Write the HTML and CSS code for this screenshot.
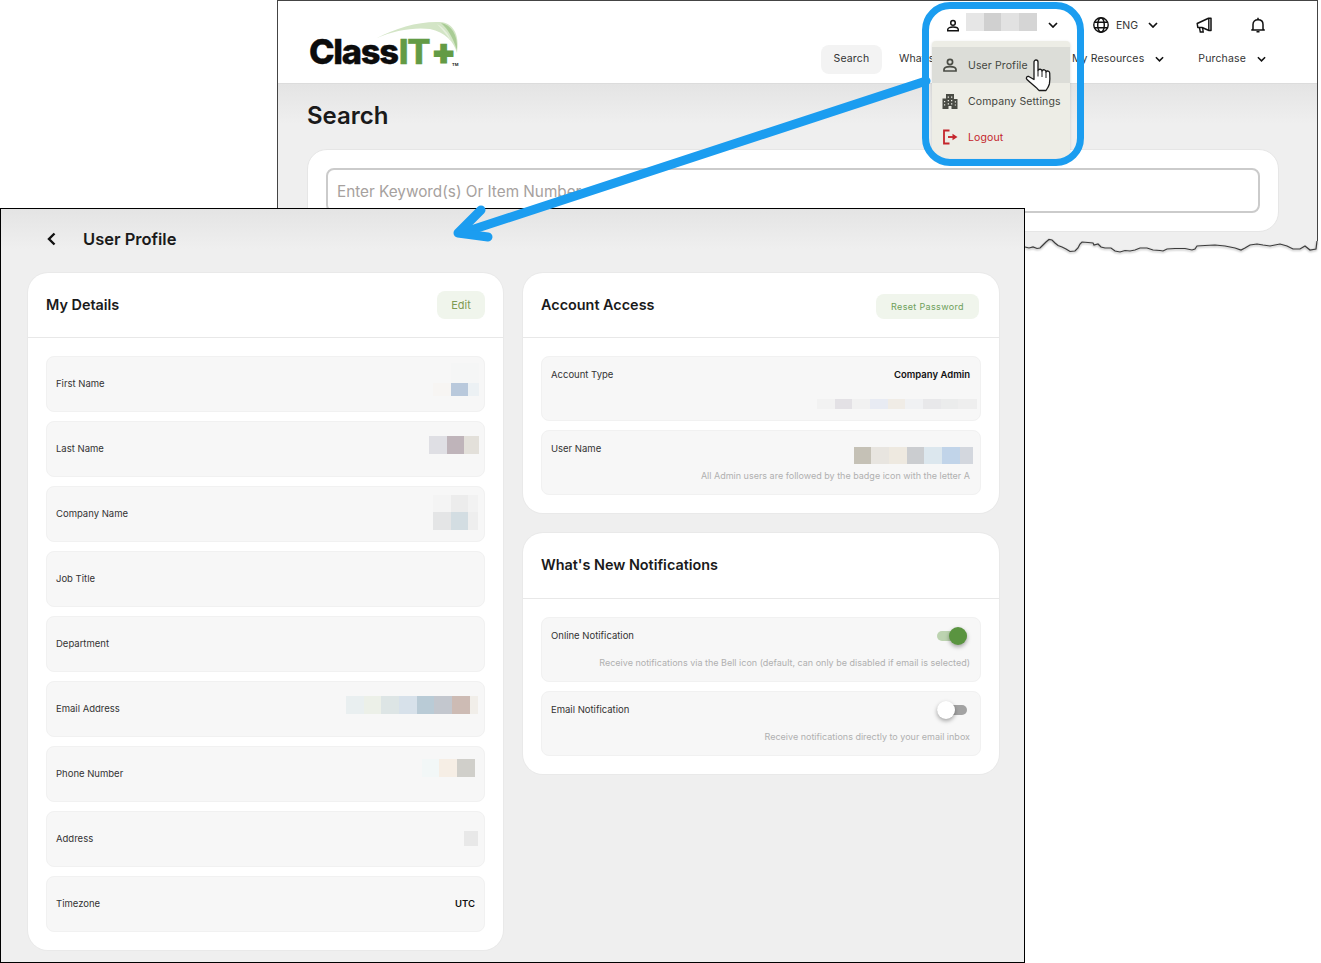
FILE: index.html
```html
<!DOCTYPE html>
<html lang="en">
<head>
<meta charset="utf-8">
<title>User Profile</title>
<link rel="stylesheet" href="styles.css">
</head>
<body>
<div class="canvas">

  <section class="win-back">
    <header class="top">
      <div class="logo">
        <svg class="swoosh" width="90" height="40" viewBox="0 0 90 40">
          <path fill="#d3e5c6" d="M2 18C20 8 45 1 65 2 78 3 85 14 82 33 79 22 70 12 55 9 38 7 18 11 2 18Z"/>
          <path fill="#a9cc95" d="M66 3C76 5 83 14 82 30 78 18 73 9 66 3Z"/>
          <path fill="#e6f0dd" d="M62 4C69 8 74 14 76 21 72 15 67 9 62 4Z"/>
        </svg>
        <span class="logo-text">Class<span class="logo-green">IT</span><span class="logo-plus">+</span></span>
        <span class="logo-tm">TM</span>
      </div>
      <div class="top-right">
        <div class="util-row">
          <svg class="i-user" viewBox="0 0 16 14"><circle cx="8" cy="4" r="2.6" fill="none" stroke="#111" stroke-width="1.7"/><path d="M2 13v-1.400C2 9.700 5 8.600 8 8.600s6 1.100 6 3V13Z" fill="none" stroke="#111" stroke-width="1.700"/></svg>
          <span class="blur-name"></span>
          <svg class="chev" viewBox="0 0 10 6"><path d="M1 1l4 4 4-4" fill="none" stroke="#111" stroke-width="1.700"/></svg>
          <svg class="i-globe" viewBox="0 0 16 16"><g fill="none" stroke="#111" stroke-width="1.400"><circle cx="8" cy="8" r="7.200"/><ellipse cx="8" cy="8" rx="3.300" ry="7.200"/><path d="M1.500 5.300h13M1.500 10.700h13"/></g></svg>
          <span class="eng">ENG</span>
          <svg class="chev chev-eng" viewBox="0 0 10 6"><path d="M1 1l4 4 4-4" fill="none" stroke="#111" stroke-width="1.700"/></svg>
          <svg class="i-mega" viewBox="0 0 16 16"><path d="M1.200 6.500L12.500 1.200H15V13.500H13L6 10.500H1.800Z" fill="none" stroke="#111" stroke-width="1.500" stroke-linejoin="round"/><path d="M3.500 10.800l.8 4.200h2.900l-.6-4.300M12.800 1.500v11.800" fill="none" stroke="#111" stroke-width="1.400"/></svg>
          <svg class="i-bell" viewBox="0 0 14 16"><path d="M2 12V7.500C2 4.500 4 2.800 7 2.800s5 1.700 5 4.700V12l1.200 1H.8Z" fill="none" stroke="#111" stroke-width="1.500" stroke-linejoin="round"/><path d="M7 .8v2M5.500 14.700h3" stroke="#111" stroke-width="1.500"/></svg>
        </div>
        <nav class="nav-row">
          <span class="nav-pill">Search</span>
          <span class="nav-item nav-whats">What's New</span>
          <span class="nav-item">My Resources</span>
          <svg class="chev chev-nav" viewBox="0 0 10 6"><path d="M1 1l4 4 4-4" fill="none" stroke="#111" stroke-width="1.700"/></svg>
          <span class="nav-item nav-purchase">Purchase</span>
          <svg class="chev chev-nav" viewBox="0 0 10 6"><path d="M1 1l4 4 4-4" fill="none" stroke="#111" stroke-width="1.700"/></svg>
        </nav>
      </div>
    </header>
    <div class="search-body">
      <h1 class="search-title">Search</h1>
      <div class="search-card">
        <div class="search-input">Enter Keyword(s) Or Item Number</div>
      </div>
    </div>

    <div class="menu">
      <div class="menu-row is-hover">
        <svg class="menu-icon" viewBox="0 0 16 16"><circle cx="8" cy="5" r="2.600" fill="none" stroke="#4a4c45" stroke-width="1.700"/><path d="M2 14v-1.400C2 10.700 5 9.600 8 9.600s6 1.100 6 3V14Z" fill="none" stroke="#4a4c45" stroke-width="1.700"/></svg>
        <span>User Profile</span>
      </div>
      <div class="menu-row">
        <svg class="menu-icon" viewBox="0 0 16 16"><path fill="#4a4c45" fill-rule="evenodd" d="M.5 16V5.500h3.500V1h8v5h3.500v10H9.500v-3h-3v3ZM2 8v1.200h1.200V8Zm0 3.200v1.200h1.200v-1.200ZM5.700 3.500v1.200H7V3.500Zm3.300 0v1.200h1.300V3.500ZM5.700 7v1.200H7V7ZM9 7v1.200h1.300V7ZM5.700 10.300v1.200H7v-1.200Zm3.300 0v1.200h1.300v-1.200Zm3.800-2.100v1.200H14V8.200Zm0 3.200v1.200H14v-1.200Z"/></svg>
        <span>Company Settings</span>
      </div>
      <div class="menu-row menu-logout">
        <svg class="menu-icon" viewBox="0 0 16 16"><path d="M7.500 1.500H2v13h5.500" fill="none" stroke="#c4242b" stroke-width="1.800"/><path d="M6 8h6" stroke="#c4242b" stroke-width="1.800"/><path d="M10.500 4.800l5 3.200-5 3.200Z" fill="#c4242b"/></svg>
        <span>Logout</span>
      </div>
    </div>

    <svg class="torn" width="296" height="30" viewBox="0 0 296 30">
      <path class="torn-fill" d="M0 12L4 13 8 12 12 13.500 15 13 18 10 21 7 24 4.500 27 5 30 8 33 10.500 37 12 41 14 45 16.500 50 16 53 13 55 9 57 7 63 7.500 68 8 69 10 73 9 76 12 80 13 86 13 90 16 95 17 100 15.500 105 16 110 15 115 13 122 13 128 15 135 15.500 138 16 142 14 150 13.500 160 13.500 167 15 170 14 172 11 180 10.500 190 10 200 11 210 13 216 15 220 13 225 10 232 9 238 10 245 11 255 9 262 11 268 14 275 14 280 11 285 15 291 14 292 6 296 6V30H0Z"/>
      <path class="torn-line" d="M0 12L4 13 8 12 12 13.500 15 13 18 10 21 7 24 4.500 27 5 30 8 33 10.500 37 12 41 14 45 16.500 50 16 53 13 55 9 57 7 63 7.500 68 8 69 10 73 9 76 12 80 13 86 13 90 16 95 17 100 15.500 105 16 110 15 115 13 122 13 128 15 135 15.500 138 16 142 14 150 13.500 160 13.500 167 15 170 14 172 11 180 10.500 190 10 200 11 210 13 216 15 220 13 225 10 232 9 238 10 245 11 255 9 262 11 268 14 275 14 280 11 285 15 291 14 292 6"/>
    </svg>
  </section>

  <section class="win-front">
    <div class="page-head">
      <svg class="back-chev" viewBox="0 0 9 14"><path d="M7.500 1.500L2 7l5.500 5.500" fill="none" stroke="#111" stroke-width="2.400"/></svg>
      <h2 class="page-title">User Profile</h2>
    </div>
    <div class="columns">
      <div class="col col-left">
        <article class="card">
          <div class="card-head">
            <h3 class="card-title">My Details</h3>
            <span class="btn btn-edit">Edit</span>
          </div>
          <div class="card-body">
            <div class="field"><span>First Name</span><i class="blur blur-first-a"></i><i class="blur blur-first"></i></div>
            <div class="field"><span>Last Name</span><i class="blur blur-last"></i></div>
            <div class="field"><span>Company Name</span><i class="blur blur-co-a"></i><i class="blur blur-co"></i></div>
            <div class="field"><span>Job Title</span></div>
            <div class="field"><span>Department</span></div>
            <div class="field"><span>Email Address</span><i class="blur blur-email"></i></div>
            <div class="field"><span>Phone Number</span><i class="blur blur-phone"></i></div>
            <div class="field"><span>Address</span><i class="blur blur-address"></i></div>
            <div class="field"><span>Timezone</span><b class="value">UTC</b></div>
          </div>
        </article>
      </div>
      <div class="col col-right">
        <article class="card">
          <div class="card-head">
            <h3 class="card-title">Account Access</h3>
            <span class="btn btn-reset">Reset Password</span>
          </div>
          <div class="card-body">
            <div class="info">
              <div class="info-top"><span>Account Type</span><b class="value">Company Admin</b></div>
              <i class="blur blur-type"></i>
            </div>
            <div class="info">
              <div class="info-top"><span>User Name</span></div>
              <i class="blur blur-user"></i>
              <p class="note">All Admin users are followed by the badge icon with the letter A</p>
            </div>
          </div>
        </article>
        <article class="card">
          <div class="card-head card-head-tall">
            <h3 class="card-title">What's New Notifications</h3>
          </div>
          <div class="card-body">
            <div class="info">
              <div class="info-top"><span>Online Notification</span><span class="toggle toggle-on"></span></div>
              <p class="note">Receive notifications via the Bell icon (default, can only be disabled if email is selected)</p>
            </div>
            <div class="info">
              <div class="info-top"><span>Email Notification</span><span class="toggle toggle-off"></span></div>
              <p class="note">Receive notifications directly to your email inbox</p>
            </div>
          </div>
        </article>
      </div>
    </div>
  </section>

  <svg class="arrow" width="1321" height="963" viewBox="0 0 1321 963">
    <g fill="none" stroke="#1b9df0" stroke-width="9" stroke-linecap="round" stroke-linejoin="round">
      <path d="M926 81L462 233"/>
      <path d="M481 210L458 233 488 237"/>
    </g>
  </svg>
  <div class="ring"></div>
  <svg class="hand" width="30" height="36" viewBox="0 0 30 36">
    <path d="M10 4a2 2 0 0 1 4 0v8.500a2.100 2.100 0 0 1 4 .5 2.100 2.100 0 0 1 4 1 2 2 0 0 1 3.700 1c.3 4 .3 8-.3 11-.6 2.500-2 4.500-3.400 6.500H15c-2-3-8-7-12-11-1.500-1.500-.2-3.500 1.800-3l5.200 3Z" fill="#fff" stroke="#1a1a1a" stroke-width="1.300" stroke-linejoin="round"/>
    <path d="M14 12.500v6M18 13v6M22 14v6" stroke="#1a1a1a" stroke-width="1" fill="none"/>
  </svg>
</div>
</body>
</html>
```

FILE: styles.css
```css
* { box-sizing: border-box; }
html, body { margin: 0; padding: 0; background: #fff; }
body { font-family: Inter, "Liberation Sans", sans-serif; color: #222; }
h1, h2, h3, p { margin: 0; }
i, b { font-style: normal; }

.canvas { position: relative; width: 1321px; height: 963px; overflow: hidden; background: #fff; }

/* Back window (free canvas) */
.win-back {
  position: absolute; left: 277px; top: 0; width: 1041px; height: 262px;
  border: 1px solid #444; border-bottom: 0; background: #efefef;
}
.top {
  display: flex; justify-content: space-between; height: 83px;
  background: #fff; border-bottom: 1px solid #dcdcdc;
}
.logo { position: relative; margin: 31px 0 0 31px; width: 160px; height: 42px; }
.logo-text {
  display: block; font-family: Inter, sans-serif; font-weight: 800; font-size: 34.500px;
  line-height: 38px; letter-spacing: -1.300px; color: #0c0c0c; position: relative;
  -webkit-text-stroke: .4px currentColor;
}
.logo-green { color: #639b45; margin-left: 1px; }
.logo-plus {
  color: #639b45; font-weight: 900; font-size: 35px; margin-left: 2px;
  letter-spacing: -4px; -webkit-text-stroke: 1.200px currentColor;
}
.swoosh { position: absolute; left: 66px; top: -12px; }
.logo-tm { position: absolute; left: 143px; top: 30px; font-size: 4px; font-weight: 700; color: #222; }

.top-right { display: flex; flex-direction: column; align-items: flex-end; padding: 14px 51px 0 0; }
.util-row { display: flex; align-items: center; height: 20px; margin-right: 1px; }
.nav-row { display: flex; align-items: center; margin-top: 10px; height: 29px; font-size: 10.500px; letter-spacing: .15px; color: #333; }
.i-user { width: 14px; height: 13px; margin-right: 6px; }
.blur-name {
  width: 71px; height: 18px; margin: -6px 11px 0 0;
  background: linear-gradient(90deg, #e6e6e6 18px, #d0d0d0 18px 35px, #e2e2e2 35px 53px, #d5d5d5 53px);
}
.chev { width: 10px; height: 6px; }
.i-globe { width: 16px; height: 16px; margin-left: 35px; }
.eng { font-size: 10.500px; color: #333; margin-left: 7px; width: 22px; }
.chev-eng { margin-left: 10px; }
.i-mega { width: 16px; height: 16px; margin-left: 38px; }
.i-bell { width: 14px; height: 16px; margin-left: 39px; }
.nav-pill {
  display: flex; align-items: center; justify-content: center; width: 61px; height: 29px;
  padding-bottom: 2px; background: #f3f3f3; border-radius: 8px;
}
.nav-item { padding-bottom: 2px; }
.nav-whats { margin-left: 17px; width: 173px; }
.chev-nav { width: 9px; margin-left: 11px; margin-bottom: 2px; }
.nav-purchase { margin-left: 34px; }

.search-body {
  padding: 18px 38px 0 29px; height: 178px;
  background: linear-gradient(#e4e4e4, #efefef 40px);
}
.search-title { font-size: 24px; font-weight: 600; line-height: 28px; color: #1a1a1a; }
.search-card {
  margin-top: 19px; height: 83px; padding: 18px; background: #fff;
  border: 1px solid #e6e6e6; border-radius: 20px;
}
.search-input {
  height: 45px; padding: 0 9px; line-height: 43px; font-size: 15.300px; color: #a6a19e;
  border: 2px solid #cbcbcb; border-radius: 8px;
}

.menu {
  position: absolute; left: 654px; top: 40px; width: 138px; height: 117px; padding-top: 6px;
  background: #edede6; border-radius: 4px; box-shadow: 0 1px 3px rgba(0,0,0,.15);
}
.menu-row { display: flex; align-items: center; gap: 10px; height: 36px; padding-left: 10px; font-size: 10.500px; letter-spacing: .12px; color: #44463f; }
.menu-row.is-hover { background: #dcddd8; }
.menu-logout { color: #c4242b; }
.menu-icon { width: 16px; height: 16px; }

.torn { position: absolute; left: 747px; top: 234px; }
.torn-fill { fill: #fff; }
.torn-line { fill: none; stroke: #3c3c3c; stroke-width: 1.200; filter: drop-shadow(0 1px 1px rgba(0,0,0,.4)); }

/* Front window */
.win-front {
  position: absolute; left: 0; top: 208px; width: 1025px; height: 755px;
  border: 1px solid #000; padding: 0 25px 0 27px;
  background: linear-gradient(#e4e4e4, #efefef 40px);
}
.page-head { display: flex; align-items: center; height: 64px; padding: 0 0 4px 19px; }
.back-chev { width: 9px; height: 14px; }
.page-title { margin-left: 27px; font-size: 16.500px; font-weight: 600; color: #1a1a1a; }
.columns { display: flex; gap: 20px; align-items: flex-start; }
.col-left { width: 475px; }
.col-right { flex: 1; display: flex; flex-direction: column; gap: 20px; }
.card { background: #fff; border-radius: 20px; box-shadow: 0 0 0 1px #e9e9e9; }
.card-head {
  display: flex; align-items: center; justify-content: space-between; height: 65px;
  padding: 0 18px; border-bottom: 1px solid #e8e8e8;
}
.card-head-tall { height: 66px; padding-bottom: 1px; }
.card-title { margin-top: -1px; font-size: 14.400px; font-weight: 600; color: #1a1a1a; }
.card-body { display: flex; flex-direction: column; gap: 9px; padding: 18px; }
.btn { display: flex; align-items: center; justify-content: center; background: #f0f5ec; border-radius: 8px; }
.btn-edit { width: 48px; height: 28px; font-size: 11px; color: #7f9a52; }
.btn-reset { width: 103px; height: 25px; margin: 3px 2px 0 0; font-size: 9px; letter-spacing: .35px; color: #6ea05a; }

.field, .info {
  position: relative; background: #f7f7f7; border: 1px solid #f1f1f1; border-radius: 8px;
  font-size: 9.500px; color: #333;
}
.field { display: flex; align-items: center; justify-content: space-between; height: 56px; padding: 0 9px 2px; }
.value { font-weight: 600; color: #111; }
.info { height: 65px; padding: 11px 10px 0 9px; }
.info-top { display: flex; align-items: center; justify-content: space-between; height: 12px; }
.note { margin-top: 16px; text-align: right; font-size: 9px; line-height: 12px; color: #b0b0b0; }

/* Redaction patches lie over the values */
.blur { position: absolute; display: block; }
.blur-first-a { right: 5px; top: 6px; width: 28px; height: 20px; background: #f5f6f6; }
.blur-first { right: 5px; top: 26px; width: 46px; height: 13px; background: linear-gradient(90deg, #f7f5f3 18px, #b9c9dc 18px 35px, #ecf1f4 35px); }
.blur-last { right: 5px; top: 14px; width: 50px; height: 18px; background: linear-gradient(90deg, #dfdfe4 18px, #bfb4ba 18px 35px, #e3e0da 35px); }
.blur-co-a { right: 6px; top: 8px; width: 45px; height: 17px; background: linear-gradient(90deg, #f4f4f4 18px, #ececec 18px 35px, #f2f2f2 35px); }
.blur-co { right: 6px; top: 25px; width: 45px; height: 18px; background: linear-gradient(90deg, #e4e5e6 18px, #d3dde2 18px 35px, #eeeeee 35px); }
.blur-email { right: 6px; top: 14px; width: 132px; height: 18px; background: linear-gradient(90deg, #e9eff0 18px, #ecf0e8 18px 35px, #dde5e5 35px 53px, #d7e1ea 53px 71px, #b9cbd6 71px 88px, #c3c7ce 88px 106px, #cdbbb4 106px 124px, #f1eee9 124px); }
.blur-phone { right: 9px; top: 12px; width: 53px; height: 18px; background: linear-gradient(90deg, #f2f7f7 17px, #f6eee5 17px 35px, #d0cfca 35px); }
.blur-address { right: 6px; top: 19px; width: 14px; height: 15px; background: #e8e8e8; }
.blur-type { right: 3px; top: 42px; width: 160px; height: 10px; background: linear-gradient(90deg, #f2f2f2 18px, #e3e1e5 18px 35px, #f1f1f1 35px 53px, #e8ebf3 53px 71px, #f0ece6 71px 88px, #f0f1f3 88px 106px, #e8e8ea 106px 124px, #ebecec 124px 141px, #eeeeee 141px); }
.blur-user { right: 7px; top: 16px; width: 119px; height: 17px; background: linear-gradient(90deg, #c5c1b6 17px, #e8e5e0 17px 35px, #eee9e0 35px 53px, #cbcdd0 53px 70px, #dce7ee 70px 88px, #c1d4e9 88px 106px, #d3d7de 106px); }

.toggle { position: relative; display: block; width: 30px; height: 10px; margin: 2px 3px 0 0; border-radius: 5px; }
.toggle::after { content: ""; position: absolute; top: -4px; width: 18px; height: 18px; border-radius: 50%; box-shadow: 0 2px 4px rgba(0,0,0,.35); }
.toggle-on { background: #bcd3b0; }
.toggle-on::after { right: 0; background: #5a9440; }
.toggle-off { background: #a3a3a3; }
.toggle-off::after { left: 0; background: #fff; }

/* Annotations drawn over the windows */
.arrow { position: absolute; left: 0; top: 0; pointer-events: none; }
.ring { position: absolute; left: 922px; top: 2px; width: 162px; height: 164px; border: 7px solid #1b9df0; border-radius: 28px; }
.hand { position: absolute; left: 1024px; top: 58px; }
```
